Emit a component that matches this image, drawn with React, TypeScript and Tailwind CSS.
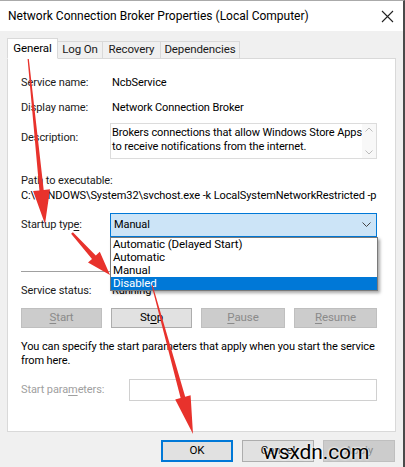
const font = { fontFamily: 'Roboto, "Liberation Sans", Arial, sans-serif' };

type Pt = [number, number];

function arrowPoints(tail: Pt, tip: Pt, headLen: number, headW: number, w0: number, w1: number) {
  const dx = tip[0] - tail[0];
  const dy = tip[1] - tail[1];
  const len = Math.hypot(dx, dy);
  const ux = dx / len;
  const uy = dy / len;
  const nx = -uy;
  const ny = ux;
  const bx = tip[0] - ux * headLen;
  const by = tip[1] - uy * headLen;
  const p = (x: number, y: number) => `${x.toFixed(1)},${y.toFixed(1)}`;
  return [
    p(tail[0] + nx * w0, tail[1] + ny * w0),
    p(bx + nx * w1, by + ny * w1),
    p(bx + nx * headW, by + ny * headW),
    p(tip[0], tip[1]),
    p(bx - nx * headW, by - ny * headW),
    p(bx - nx * w1, by - ny * w1),
    p(tail[0] - nx * w0, tail[1] - ny * w0),
  ].join(" ");
}

function Btn({ label, u, disabled, w = "w-[81px]" }: { label: string; u: number; disabled?: boolean; w?: string }) {
  const chars = label.split("");
  return (
    <div
      className={`${w} h-[20px] flex items-center justify-center border text-[11.5px] ${
        disabled ? "bg-[#cccccc] border-[#bfbfbf] text-[#8a8a8a]" : "bg-[#e1e1e1] border-[#adadad] text-black"
      }`}
    >
      {chars.map((c, i) => (
        <span key={i} className={i === u ? "underline underline-offset-2" : ""}>
          {c}
        </span>
      ))}
    </div>
  );
}

export default function App() {
  return (
    <div style={font} className="w-[405px] h-[467px] relative bg-[#f0f0f0] border-t border-t-[#aaaaaa] border-r-2 border-r-[#4a4a4a] overflow-hidden text-[11px] tracking-[-0.1px] text-[#1a1a1a]">
      {/* title bar */}
      <div className="h-[30px] bg-white flex items-center justify-between pl-[8px] pr-[9px]">
        <span className="text-[12px] tracking-normal text-black">Network Connection Broker Properties (Local Computer)</span>
        <svg width="13" height="13" viewBox="0 0 13 13">
          <path d="M1 1 L12 12 M12 1 L1 12" stroke="#222" strokeWidth="1.1" fill="none" />
        </svg>
      </div>

      <div className="pl-[7px] pr-[7px] pt-[8px]">
        {/* tabs */}
        <div className="flex items-end h-[19px] relative z-10 text-[11.5px]">
          <div className="h-[21px] w-[51px] bg-white border border-[#d9d9d9] border-b-white flex items-center justify-center text-black -mb-[1px]">
            General
          </div>
          <div className="h-[17px] w-[45px] bg-[#f0f0f0] border border-[#d9d9d9] border-l-0 border-b-0 flex items-center justify-center">Log On</div>
          <div className="h-[17px] w-[58px] bg-[#f0f0f0] border border-[#d9d9d9] border-l-0 border-b-0 flex items-center justify-center">Recovery</div>
          <div className="h-[17px] w-[79px] bg-[#f0f0f0] border border-[#d9d9d9] border-l-0 border-b-0 flex items-center justify-center">Dependencies</div>
        </div>

        {/* panel */}
        <div className="h-[374px] w-[389px] bg-white border border-[#d9d9d9] pl-[13px] pr-[18px]">
          <div className="grid grid-cols-[91px_1fr] items-center mt-[16px] h-[16px]">
            <span>Service name:</span>
            <span className="text-black">NcbService</span>
          </div>
          <div className="grid grid-cols-[91px_1fr] items-center mt-[9px] h-[16px]">
            <span>Display name:</span>
            <span className="text-black">Network Connection Broker</span>
          </div>
          <div className="grid grid-cols-[89px_1fr] items-start mt-[7px]">
            <span className="mt-[7px]">Description:</span>
            <div className="h-[36px] border border-[#dcdcdc] flex justify-between pl-[1px] leading-[14px] text-black">
              <span className="pt-[2px] whitespace-nowrap">
                Brokers connections that allow Windows Store Apps
                <br />
                to receive notifications from the internet.
              </span>
              <div className="w-[14px] flex flex-col justify-between items-center py-[3px] bg-[#f8f8f8]">
                <svg width="8" height="5" viewBox="0 0 8 5"><path d="M0.5 4.5 L4 1 L7.5 4.5" stroke="#bdbdbd" fill="none" /></svg>
                <svg width="8" height="5" viewBox="0 0 8 5"><path d="M0.5 0.5 L4 4 L7.5 0.5" stroke="#bdbdbd" fill="none" /></svg>
              </div>
            </div>
          </div>
          <div className="mt-[14px] leading-[15px]">Path to executable:</div>
          <div className="leading-[15px] whitespace-nowrap overflow-hidden w-[357px] text-black">
            C:\WINDOWS\System32\svchost.exe -k LocalSystemNetworkRestricted -p
          </div>
          <div className="grid grid-cols-[89px_1fr] items-center mt-[10px]">
            <span>
              Startup typ<span className="underline underline-offset-2">e</span>:
            </span>
            <div className="h-[24px] border border-[#0078d7] bg-[#cce4f7] flex items-center justify-between pl-[3px] pr-[5px] text-black">
              <span>Manual</span>
              <svg width="9" height="6" viewBox="0 0 9 6"><path d="M0.5 0.5 L4.5 4.5 L8.5 0.5" stroke="#444" fill="none" /></svg>
            </div>
          </div>
          <div className="mt-[34px] h-px bg-[#a0a0a0] w-[357px]" />
          <div className="grid grid-cols-[91px_1fr] items-center mt-[11px] h-[16px]">
            <span>Service status:</span>
            <span className="text-black">Running</span>
          </div>
          <div className="flex gap-[9px] mt-[9px]">
            <Btn label="Start" u={0} disabled />
            <Btn label="Stop" u={2} />
            <Btn label="Pause" u={0} disabled w="w-[84px]" />
            <Btn label="Resume" u={0} disabled w="w-[83px]" />
          </div>
          <div className="mt-[12px] leading-[14px] text-black whitespace-nowrap">
            You can specify the start parameters that apply when you start the service
            <br />
            from here.
          </div>
          <div className="grid grid-cols-[108px_1fr] items-center mt-[11px]">
            <span className="text-[#a0a0a0]">
              Start para<span className="underline underline-offset-2">m</span>eters:
            </span>
            <div className="h-[22px] border border-[#d0d0d0]" />
          </div>
        </div>

        {/* bottom buttons */}
        <div className="flex justify-end gap-[9px] mt-[8px] pr-[1px] text-[11.5px]">
          <div className="w-[72px] h-[22px] border-2 border-[#0078d7] bg-[#e1e1e1] flex items-center justify-center text-black">OK</div>
          <div className="w-[72px] h-[22px] border border-[#adadad] bg-[#e1e1e1] flex items-center justify-center text-black">Cancel</div>
          <div className="w-[72px] h-[22px] border border-[#bfbfbf] bg-[#cccccc] flex items-center justify-center text-[#8a8a8a]">Apply</div>
        </div>
      </div>

      {/* open dropdown list */}
      <div className="absolute left-[110px] top-[236px] w-[268px] bg-white border border-[#7a7a7a] shadow-[2px_2px_3px_rgba(0,0,0,0.35)] text-black text-[11.5px] leading-[13px]">
        <div className="pl-[2px]">Automatic (Delayed Start)</div>
        <div className="pl-[2px]">Automatic</div>
        <div className="pl-[2px]">Manual</div>
        <div className="pl-[2px] bg-[#0078d7] text-white">Disabled</div>
      </div>

      {/* red arrows */}
      <svg className="absolute inset-0 pointer-events-none" width="405" height="467" viewBox="0 0 405 467">
        <polygon points={arrowPoints([28, 56], [45, 223], 34, 8.5, 0.6, 2.2)} fill="#e8322c" />
        <polygon points={arrowPoints([72, 232], [110, 274], 24, 8, 1.2, 2.6)} fill="#e8322c" />
        <polygon points={arrowPoints([152, 284], [193, 433], 38, 8, 0.5, 2.4)} fill="#e8322c" />
      </svg>

      {/* watermark */}
      <div className="absolute left-[263px] top-[441px] text-[21px] text-black leading-none" style={{ textShadow: "0 0 2px #fff, 0 0 3px #fff" }}>
        wsxdn.com
      </div>
    </div>
  );
}
